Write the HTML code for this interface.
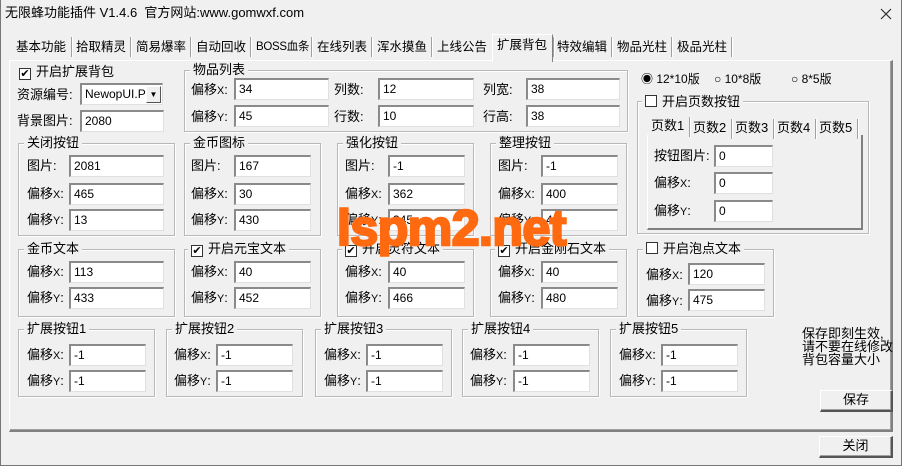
<!DOCTYPE html><html><head><meta charset="utf-8"><style>
*{margin:0;padding:0;box-sizing:border-box}
body{width:902px;height:466px;background:#f0f0f0;position:relative;overflow:hidden;font-family:"Liberation Sans","Noto Sans CJK SC",sans-serif;font-size:12px;color:#000}
.a{position:absolute;white-space:nowrap;line-height:14px}
.i{position:absolute;background:#fff;border-top:2px solid #8a8a8a;border-left:2px solid #8a8a8a;border-right:1px solid #e0e0e0;border-bottom:1px solid #e0e0e0;height:22px;padding:2px 3px;font-size:12px;line-height:14px}
.g{position:absolute;border:1px solid #b8b8b8;box-shadow:1px 1px 0 #fff inset,1px 1px 0 #fff}
.lg{position:absolute;background:#f0f0f0;padding:0 3px;line-height:14px;white-space:nowrap;font-size:13px}
.cb{display:inline-block;width:12px;height:12px;border:1px solid #333;background:#fff;vertical-align:-1px;margin-right:5px;position:relative;font-size:11px;line-height:10px;text-align:center}
.tab{position:absolute;top:39px;font-size:12.5px;line-height:16px;white-space:nowrap}
.sep{position:absolute;top:37px;width:2px;height:20px;border-left:1px solid #a0a0a0;border-right:1px solid #fff}
.btn{position:absolute;background:#f0f0f0;border:1px solid #fff;border-right:2px solid #555;border-bottom:2px solid #555;box-shadow:inset -1px -1px 0 #a0a0a0;text-align:center;font-size:13px;line-height:18px}
</style></head><body>
<div style="position:absolute;left:0;top:0;width:902px;height:466px;border:1px solid #777;border-top:none"></div>
<div class="a" style="left:5px;top:6px;font-size:13px">无限蜂功能插件 V1.4.6&nbsp; 官方网站:www.gomwxf.com</div>
<svg style="position:absolute;left:880px;top:8px" width="12" height="12"><path d="M1 1L11 11M11 1L1 11" stroke="#333" stroke-width="1.2"/></svg>

<!-- tabs -->
<div class="tab" style="left:16px">基本功能</div><div class="sep" style="left:71px"></div>
<div class="tab" style="left:76px">拾取精灵</div><div class="sep" style="left:130px"></div>
<div class="tab" style="left:136px">简易爆率</div><div class="sep" style="left:190px"></div>
<div class="tab" style="left:196px">自动回收</div><div class="sep" style="left:250px"></div>
<div class="tab" style="left:256px;font-size:11.5px;letter-spacing:-0.3px">BOSS血条</div><div class="sep" style="left:311px"></div>
<div class="tab" style="left:317px">在线列表</div><div class="sep" style="left:371px"></div>
<div class="tab" style="left:377px">浑水摸鱼</div><div class="sep" style="left:431px"></div>
<div class="tab" style="left:437px">上线公告</div>
<div style="position:absolute;left:492px;top:34px;width:61px;height:28px;background:#f0f0f0;border:1px solid #fff;border-right:1px solid #808080;border-bottom:none;z-index:2"></div>
<div class="tab" style="left:497px;top:37px;z-index:3">扩展背包</div>
<div class="sep" style="left:553px"></div>
<div class="tab" style="left:557px">特效编辑</div><div class="sep" style="left:611px"></div>
<div class="tab" style="left:617px">物品光柱</div><div class="sep" style="left:671px"></div>
<div class="tab" style="left:677px">极品光柱</div><div class="sep" style="left:731px"></div>
<!-- panel -->
<div style="position:absolute;left:9px;top:60px;width:884px;height:372px;border-left:1px solid #fff;border-top:1px solid #fff;border-right:2px solid #808080;border-bottom:2px solid #808080;box-shadow:inset -1px -1px 0 #a0a0a0"></div>

<div class="a" style="left:19px;top:65px;font-size:13px"><span class="cb">✔</span>开启扩展背包</div>
<div class="a" style="left:17px;top:88px;font-size:13px">资源编号:</div>
<div class="i" style="left:80px;top:83px;width:83px;overflow:hidden">NewopUI.Pak</div>
<div style="position:absolute;left:146px;top:86px;width:15px;height:17px;background:#f0f0f0;border:1px solid #fff;border-right:1px solid #555;border-bottom:1px solid #555;font-size:8px;text-align:center;line-height:16px">▼</div>
<div class="a" style="left:17px;top:114px;font-size:13px">背景图片:</div>
<div class="i" style="left:80px;top:110px;width:84px">2080</div>

<!-- 物品列表 -->
<div class="g" style="left:184px;top:70px;width:444px;height:62px"></div><div class="lg" style="left:190px;top:63px">物品列表</div>
<div class="a" style="left:191px;top:83px;font-size:13px">偏移<small>X</small>:</div><div class="i" style="left:234px;top:78px;width:95px">34</div>
<div class="a" style="left:191px;top:110px;font-size:13px">偏移<small>Y</small>:</div><div class="i" style="left:234px;top:105px;width:95px">45</div>
<div class="a" style="left:334px;top:83px;font-size:13px">列数:</div><div class="i" style="left:378px;top:78px;width:96px">12</div>
<div class="a" style="left:334px;top:110px;font-size:13px">行数:</div><div class="i" style="left:378px;top:105px;width:96px">10</div>
<div class="a" style="left:483px;top:83px;font-size:13px">列宽:</div><div class="i" style="left:526px;top:78px;width:94px">38</div>
<div class="a" style="left:483px;top:110px;font-size:13px">行高:</div><div class="i" style="left:526px;top:105px;width:94px">38</div>

<!-- radios -->
<div class="a" style="left:641px;top:72px">◉ 12*10版</div>
<div class="a" style="left:714px;top:72px">○ 10*8版</div>
<div class="a" style="left:791px;top:72px">○ 8*5版</div>

<!-- 页数 -->
<div class="g" style="left:637px;top:101px;width:232px;height:133px"></div>
<div class="lg" style="left:642px;top:95px"><span class="cb"></span>开启页数按钮</div>
<div style="position:absolute;left:647px;top:135px;width:216px;height:95px;border-left:1px solid #fff;border-right:2px solid #808080;border-bottom:2px solid #808080"></div>
<div class="a" style="left:651px;top:119px;font-size:13px">页数1</div><div class="sep" style="left:689px;top:117px"></div>
<div class="a" style="left:693px;top:121px;font-size:13px">页数2</div><div class="sep" style="left:731px;top:119px"></div>
<div class="a" style="left:735px;top:121px;font-size:13px">页数3</div><div class="sep" style="left:773px;top:119px"></div>
<div class="a" style="left:777px;top:121px;font-size:13px">页数4</div><div class="sep" style="left:815px;top:119px"></div>
<div class="a" style="left:819px;top:121px;font-size:13px">页数5</div><div class="sep" style="left:857px;top:119px"></div>
<div class="a" style="left:654px;top:149px;font-size:13px">按钮图片:</div><div class="i" style="left:714px;top:145px;width:59px">0</div>
<div class="a" style="left:654px;top:176px;font-size:13px">偏移<small>X</small>:</div><div class="i" style="left:714px;top:172px;width:59px">0</div>
<div class="a" style="left:654px;top:204px;font-size:13px">偏移<small>Y</small>:</div><div class="i" style="left:714px;top:200px;width:59px">0</div>

<!-- row 2 -->
<div class="g" style="left:18px;top:143px;width:157px;height:93px"></div><div class="lg" style="left:24px;top:136px">关闭按钮</div>
<div class="a" style="left:27px;top:159px;font-size:13px">图片:</div><div class="i" style="left:69px;top:155px;width:95px">2081</div>
<div class="a" style="left:27px;top:187px;font-size:13px">偏移<small>X</small>:</div><div class="i" style="left:69px;top:183px;width:95px">465</div>
<div class="a" style="left:27px;top:213px;font-size:13px">偏移<small>Y</small>:</div><div class="i" style="left:69px;top:209px;width:95px">13</div>

<div class="g" style="left:184px;top:143px;width:137px;height:93px"></div><div class="lg" style="left:190px;top:136px">金币图标</div>
<div class="a" style="left:191px;top:159px;font-size:13px">图片:</div><div class="i" style="left:234px;top:155px;width:77px">167</div>
<div class="a" style="left:191px;top:187px;font-size:13px">偏移<small>X</small>:</div><div class="i" style="left:234px;top:183px;width:77px">30</div>
<div class="a" style="left:191px;top:213px;font-size:13px">偏移<small>Y</small>:</div><div class="i" style="left:234px;top:209px;width:77px">430</div>

<div class="g" style="left:337px;top:143px;width:137px;height:93px"></div><div class="lg" style="left:343px;top:136px">强化按钮</div>
<div class="a" style="left:345px;top:159px;font-size:13px">图片:</div><div class="i" style="left:388px;top:155px;width:77px">-1</div>
<div class="a" style="left:345px;top:187px;font-size:13px">偏移<small>X</small>:</div><div class="i" style="left:388px;top:183px;width:77px">362</div>
<div class="a" style="left:345px;top:213px;font-size:13px">偏移<small>Y</small>:</div><div class="i" style="left:388px;top:209px;width:77px">345</div>

<div class="g" style="left:490px;top:143px;width:137px;height:93px"></div><div class="lg" style="left:496px;top:136px">整理按钮</div>
<div class="a" style="left:498px;top:159px;font-size:13px">图片:</div><div class="i" style="left:541px;top:155px;width:77px">-1</div>
<div class="a" style="left:498px;top:187px;font-size:13px">偏移<small>X</small>:</div><div class="i" style="left:541px;top:183px;width:77px">400</div>
<div class="a" style="left:498px;top:213px;font-size:13px">偏移<small>Y</small>:</div><div class="i" style="left:541px;top:209px;width:77px">4</div>

<!-- row 3 -->
<div class="g" style="left:18px;top:249px;width:157px;height:68px"></div><div class="lg" style="left:24px;top:242px">金币文本</div>
<div class="a" style="left:27px;top:265px;font-size:13px">偏移<small>X</small>:</div><div class="i" style="left:69px;top:261px;width:95px">113</div>
<div class="a" style="left:27px;top:291px;font-size:13px">偏移<small>Y</small>:</div><div class="i" style="left:69px;top:287px;width:95px">433</div>

<div class="g" style="left:184px;top:249px;width:137px;height:68px"></div><div class="lg" style="left:188px;top:242px"><span class="cb">✔</span>开启元宝文本</div>
<div class="a" style="left:191px;top:265px;font-size:13px">偏移<small>X</small>:</div><div class="i" style="left:234px;top:261px;width:77px">40</div>
<div class="a" style="left:191px;top:291px;font-size:13px">偏移<small>Y</small>:</div><div class="i" style="left:234px;top:287px;width:77px">452</div>

<div class="g" style="left:337px;top:249px;width:137px;height:68px"></div><div class="lg" style="left:342px;top:242px"><span class="cb">✔</span>开启灵符文本</div>
<div class="a" style="left:345px;top:265px;font-size:13px">偏移<small>X</small>:</div><div class="i" style="left:388px;top:261px;width:77px">40</div>
<div class="a" style="left:345px;top:291px;font-size:13px">偏移<small>Y</small>:</div><div class="i" style="left:388px;top:287px;width:77px">466</div>

<div class="g" style="left:490px;top:249px;width:137px;height:68px"></div><div class="lg" style="left:495px;top:242px"><span class="cb">✔</span>开启金刚石文本</div>
<div class="a" style="left:498px;top:265px;font-size:13px">偏移<small>X</small>:</div><div class="i" style="left:541px;top:261px;width:77px">40</div>
<div class="a" style="left:498px;top:291px;font-size:13px">偏移<small>Y</small>:</div><div class="i" style="left:541px;top:287px;width:77px">480</div>

<div class="g" style="left:637px;top:249px;width:137px;height:68px"></div><div class="lg" style="left:643px;top:242px"><span class="cb"></span>开启泡点文本</div>
<div class="a" style="left:646px;top:268px;font-size:13px">偏移<small>X</small>:</div><div class="i" style="left:688px;top:263px;width:77px">120</div>
<div class="a" style="left:646px;top:294px;font-size:13px">偏移<small>Y</small>:</div><div class="i" style="left:688px;top:289px;width:77px">475</div>

<!-- row 4 -->
<div class="g" style="left:18px;top:329px;width:137px;height:68px"></div><div class="lg" style="left:24px;top:322px">扩展按钮1</div>
<div class="a" style="left:27px;top:348px;font-size:13px">偏移<small>X</small>:</div><div class="i" style="left:69px;top:344px;width:77px">-1</div>
<div class="a" style="left:27px;top:374px;font-size:13px">偏移<small>Y</small>:</div><div class="i" style="left:69px;top:370px;width:77px">-1</div>

<div class="g" style="left:166px;top:329px;width:137px;height:68px"></div><div class="lg" style="left:172px;top:322px">扩展按钮2</div>
<div class="a" style="left:174px;top:348px;font-size:13px">偏移<small>X</small>:</div><div class="i" style="left:216px;top:344px;width:77px">-1</div>
<div class="a" style="left:174px;top:374px;font-size:13px">偏移<small>Y</small>:</div><div class="i" style="left:216px;top:370px;width:77px">-1</div>

<div class="g" style="left:315px;top:329px;width:137px;height:68px"></div><div class="lg" style="left:321px;top:322px">扩展按钮3</div>
<div class="a" style="left:324px;top:348px;font-size:13px">偏移<small>X</small>:</div><div class="i" style="left:366px;top:344px;width:77px">-1</div>
<div class="a" style="left:324px;top:374px;font-size:13px">偏移<small>Y</small>:</div><div class="i" style="left:366px;top:370px;width:77px">-1</div>

<div class="g" style="left:462px;top:329px;width:137px;height:68px"></div><div class="lg" style="left:468px;top:322px">扩展按钮4</div>
<div class="a" style="left:470px;top:348px;font-size:13px">偏移<small>X</small>:</div><div class="i" style="left:513px;top:344px;width:77px">-1</div>
<div class="a" style="left:470px;top:374px;font-size:13px">偏移<small>Y</small>:</div><div class="i" style="left:513px;top:370px;width:77px">-1</div>

<div class="g" style="left:610px;top:329px;width:137px;height:68px"></div><div class="lg" style="left:616px;top:322px">扩展按钮5</div>
<div class="a" style="left:619px;top:348px;font-size:13px">偏移<small>X</small>:</div><div class="i" style="left:661px;top:344px;width:77px">-1</div>
<div class="a" style="left:619px;top:374px;font-size:13px">偏移<small>Y</small>:</div><div class="i" style="left:661px;top:370px;width:77px">-1</div>

<div class="a" style="left:802px;top:327px;font-size:13px;line-height:13px">保存即刻生效,<br>请不要在线修改<br>背包容量大小</div>
<div class="btn" style="left:820px;top:390px;width:73px;height:22px">保存</div>
<div class="btn" style="left:819px;top:436px;width:74px;height:22px">关闭</div>

<div class="a" style="left:337px;top:203px;font-size:50px;line-height:50px;font-weight:bold;color:#ff6a10;letter-spacing:-0.5px;-webkit-text-stroke:2.5px #ff6a10;z-index:5">lspm2.net</div>
</body></html>
